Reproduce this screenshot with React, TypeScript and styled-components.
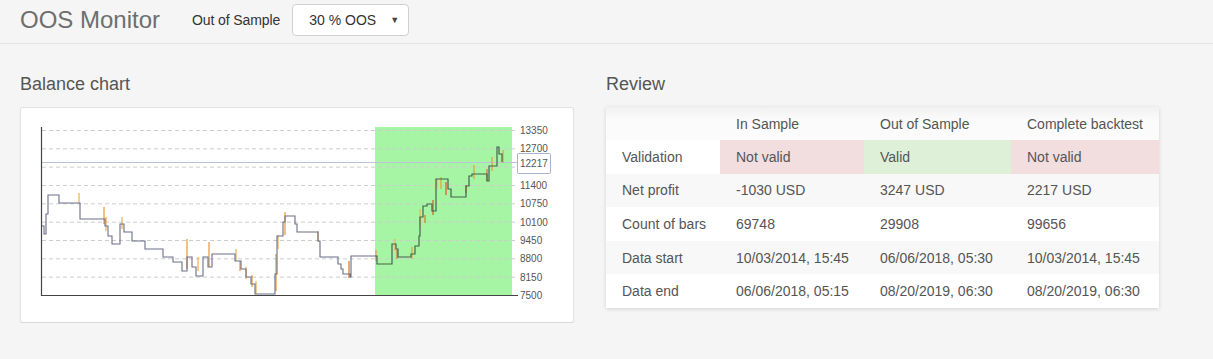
import styled, { createGlobalStyle } from 'styled-components';

const GlobalStyle = createGlobalStyle`
  body {
    margin: 0;
    background: #f5f5f6;
    font-family: 'Liberation Sans', Arial, sans-serif;
    color: #555;
  }
`;

type Tone = 'bad' | 'good' | undefined;

// balance curve, page coordinates (chart svg uses a matching viewBox)
const curve: [number, number][] = [
  [42, 227], [44, 227], [44, 235], [46, 235], [46, 215], [48, 215], [48, 196],
  [59, 196], [59, 204], [80, 204], [80, 220], [105, 220], [105, 227], [108, 227],
  [108, 237], [112, 237], [112, 245], [120, 245], [120, 225], [124, 225], [124, 233],
  [132, 233], [132, 242], [145, 242], [145, 250], [163, 250], [163, 258], [173, 258],
  [173, 263], [182, 263], [182, 272], [187, 272], [187, 258], [192, 258], [192, 268],
  [196, 268], [196, 277], [203, 277], [203, 258], [208, 258], [208, 268], [212, 268],
  [212, 255], [235, 255], [235, 262], [241, 262], [241, 270], [246, 270], [246, 278],
  [251, 278], [251, 285], [255, 285], [255, 295], [275, 295], [275, 275], [277, 275],
  [277, 237], [283, 237], [283, 223], [285, 223], [285, 217], [295, 217], [295, 225],
  [297, 225], [297, 233], [318, 233], [318, 242], [320, 242], [320, 258], [338, 258],
  [338, 265], [341, 265], [341, 270], [343, 270], [343, 275], [350, 275], [350, 278],
  [351, 278], [351, 257], [377, 257], [377, 265], [392, 265], [392, 245], [396, 245],
  [396, 250], [398, 250], [398, 258], [411, 258], [411, 255], [415, 255], [415, 247],
  [419, 247], [419, 237], [420, 237], [420, 218], [423, 218], [423, 207], [427, 207],
  [427, 205], [432, 205], [432, 212], [436, 212], [436, 180], [448, 180], [448, 190],
  [451, 190], [451, 198], [466, 198], [466, 187], [469, 187], [469, 177], [472, 177],
  [472, 175], [487, 175], [487, 182], [489, 182], [489, 167], [497, 167], [497, 148],
  [499, 148], [499, 155], [502, 155], [502, 163],
];

// short orange ticks around the steps
const spikes: [number, number, number, string][] = [
  [79, 194, 204, '#f2b45a'], [104, 208, 225, '#eaa040'], [106, 218, 232, '#f2b45a'],
  [122, 218, 230, '#f2b45a'], [187, 240, 270, '#eaa040'], [198, 258, 272, '#f2b45a'],
  [209, 243, 268, '#eaa040'], [236, 250, 262, '#f2b45a'], [240, 262, 272, '#eaa040'],
  [246, 268, 280, '#f2b45a'], [252, 276, 288, '#eaa040'], [256, 282, 295, '#f2b45a'],
  [276, 255, 292, '#eaa040'], [278, 236, 250, '#f2b45a'], [285, 213, 236, '#eaa040'],
  [318, 232, 243, '#f2b45a'], [349, 262, 279, '#e07a2a'], [376, 251, 262, '#eaa040'],
  [395, 240, 252, '#f2b45a'], [397, 251, 260, '#e07a2a'], [412, 248, 260, '#eaa040'],
  [420, 210, 228, '#f2b45a'], [425, 216, 224, '#e07a2a'], [433, 201, 216, '#e0602a'],
  [437, 180, 190, '#f2b45a'], [441, 178, 190, '#eaa040'], [446, 183, 196, '#e0602a'],
  [466, 186, 194, '#e07a2a'], [474, 166, 180, '#eaa040'], [487, 170, 182, '#e07a2a'],
  [492, 158, 172, '#eaa040'], [503, 151, 164, '#eaa040'],
];

const ticks = [13350, 12700, 12050, 11400, 10750, 10100, 9450, 8800, 8150, 7500];
const yOf = (v: number) => 296.5 - ((v - 7500) / 5850) * 165;

const rows: { label: string; cells: string[]; tones?: Tone[] }[] = [
  { label: 'Validation', cells: ['Not valid', 'Valid', 'Not valid'], tones: ['bad', 'good', 'bad'] },
  { label: 'Net profit', cells: ['-1030 USD', '3247 USD', '2217 USD'] },
  { label: 'Count of bars', cells: ['69748', '29908', '99656'] },
  { label: 'Data start', cells: ['10/03/2014, 15:45', '06/06/2018, 05:30', '10/03/2014, 15:45'] },
  { label: 'Data end', cells: ['06/06/2018, 05:15', '08/20/2019, 06:30', '08/20/2019, 06:30'] },
];

function BalanceChart() {
  const d = 'M' + curve.map(([x, y]) => `${x} ${y}`).join(' L');
  return (
    <svg width={552} height={214} viewBox="21 109 552 214">
      <defs>
        <clipPath id="is">
          <rect x={21} y={109} width={354} height={214} />
        </clipPath>
        <clipPath id="oos">
          <rect x={375} y={109} width={200} height={214} />
        </clipPath>
      </defs>
      <rect x={375} y={128} width={137} height={169} fill="#a6f5a4" />
      {ticks.slice(0, -1).map((t) => (
        <line
          key={t}
          x1={42}
          x2={516}
          y1={yOf(t)}
          y2={yOf(t)}
          stroke="#cdcdcd"
          strokeWidth={1}
          strokeDasharray="4 3"
        />
      ))}
      <line x1={42} x2={517} y1={163.5} y2={163.5} stroke="#bcc2dc" strokeWidth={1.2} />
      {spikes.map(([x, y1, y2, c], i) => (
        <line key={i} x1={x} x2={x} y1={y1} y2={y2} stroke={c} strokeWidth={1.3} />
      ))}
      <path d={d} fill="none" stroke="#6b6e88" strokeWidth={1.1} clipPath="url(#is)" />
      <path d={d} fill="none" stroke="#46634f" strokeWidth={1.2} clipPath="url(#oos)" />
      <line x1={41.5} x2={41.5} y1={128} y2={297} stroke="#444" strokeWidth={1.2} />
      <line x1={41} x2={518} y1={296.5} y2={296.5} stroke="#444" strokeWidth={1.2} />
      {ticks.map((t) =>
        t === 12050 ? null : (
          <text key={t} x={520} y={yOf(t) + 3.5} fontSize={10} fill="#555" fontFamily="'Liberation Sans', Arial, sans-serif">
            {t}
          </text>
        )
      )}
      <rect x={517.5} y={154.5} width={33} height={20} fill="#fff" stroke="#aab2d2" strokeWidth={1} rx={1} />
      <text x={520} y={168} fontSize={10} fill="#555" fontFamily="'Liberation Sans', Arial, sans-serif">
        12217
      </text>
    </svg>
  );
}

export default function App() {
  return (
    <>
      <GlobalStyle />
      <Header>
        <AppTitle>OOS Monitor</AppTitle>
        <SelectLabel>Out of Sample</SelectLabel>
        <Select>
          <span>30 % OOS</span>
          <Caret>▼</Caret>
        </Select>
      </Header>
      <Main>
        <Section>
          <SectionTitle>Balance chart</SectionTitle>
          <ChartCard>
            <BalanceChart />
          </ChartCard>
        </Section>
        <Section>
          <SectionTitle>Review</SectionTitle>
          <TableCard>
            <Table>
              <colgroup>
                <col style={{ width: 114 }} />
                <col style={{ width: 144 }} />
                <col style={{ width: 147 }} />
                <col style={{ width: 148 }} />
              </colgroup>
              <thead>
                <HeadRow>
                  <Th />
                  <Th>In Sample</Th>
                  <Th>Out of Sample</Th>
                  <Th>Complete backtest</Th>
                </HeadRow>
              </thead>
              <tbody>
                {rows.map((r) => (
                  <Row key={r.label}>
                    <Td>{r.label}</Td>
                    {r.cells.map((c, i) => (
                      <Td key={i} $tone={r.tones?.[i]}>
                        {c}
                      </Td>
                    ))}
                  </Row>
                ))}
              </tbody>
            </Table>
          </TableCard>
        </Section>
      </Main>
    </>
  );
}

const Header = styled.header`
  height: 44px;
  display: flex;
  align-items: center;
  padding: 0 20px 4px;
  box-sizing: border-box;
  border-bottom: 1px solid #e4e4e5;
`;

const AppTitle = styled.h1`
  margin: 0 32px 0 0;
  font-size: 24px;
  font-weight: normal;
  color: #6e6e6e;
`;

const SelectLabel = styled.span`
  font-size: 14px;
  color: #333;
  margin-right: 12px;
  letter-spacing: -0.1px;
`;

const Select = styled.div`
  width: 117px;
  height: 32px;
  box-sizing: border-box;
  padding: 0 9px 0 16px;
  display: flex;
  align-items: center;
  justify-content: space-between;
  background: #fff;
  border: 1px solid #d0d0d0;
  border-radius: 4px;
  font-size: 14px;
  color: #333;
`;

const Caret = styled.span`
  font-size: 9px;
  color: #444;
`;

const Main = styled.main`
  display: flex;
  gap: 32px;
  padding: 0 20px;
`;

const Section = styled.section`
  width: 554px;
`;

const SectionTitle = styled.h2`
  margin: 30px 0 12px;
  font-size: 18px;
  line-height: 21px;
  font-weight: normal;
  color: #555;
`;

const ChartCard = styled.div`
  height: 216px;
  box-sizing: border-box;
  background: #fff;
  border: 1px solid #e2e2e3;
  border-bottom-color: #d9d9db;
  border-radius: 3px;
  box-shadow: 0 1px 2px rgba(0, 0, 0, 0.05);
  svg {
    display: block;
  }
`;

const TableCard = styled.div`
  width: 553px;
  background: #fff;
  box-shadow: 0 1px 4px rgba(0, 0, 0, 0.14);
`;

const Table = styled.table`
  width: 553px;
  border-collapse: collapse;
  table-layout: fixed;
  font-size: 14px;
  color: #555;
`;

const HeadRow = styled.tr`
  height: 33px;
  background: linear-gradient(#f1f1f1, #fbfbfb 40%);
`;

const Row = styled.tr`
  height: 33.6px;
  &:nth-child(even) {
    background: #f8f8f8;
  }
`;

const Th = styled.th`
  padding: 0 16px;
  text-align: left;
  font-weight: normal;
  white-space: nowrap;
`;

const Td = styled.td<{ $tone?: Tone }>`
  padding: 0 16px;
  white-space: nowrap;
  background: ${(p) => (p.$tone === 'bad' ? '#f2dedf' : p.$tone === 'good' ? '#dff0d8' : 'transparent')};
`;
